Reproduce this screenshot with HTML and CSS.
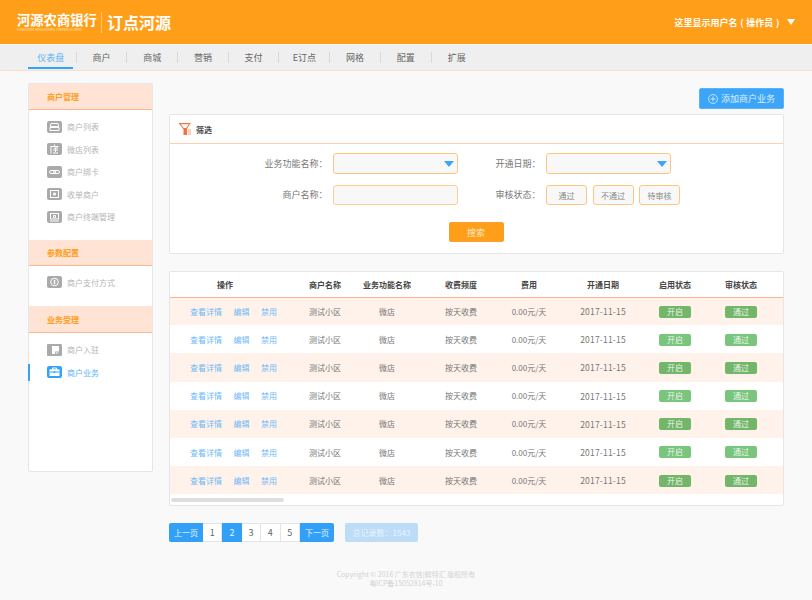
FILE: index.html
```html
<!DOCTYPE html>
<html lang="zh-CN">
<head>
<meta charset="utf-8">
<title>商户业务</title>
<link rel="stylesheet" href="styles.css">
</head>
<body>
<header class="topbar">
  <div class="logo">
    <div class="logo-bank">
      <span class="logo-cn">河源农商银行</span>
      <span class="logo-en">GUANGDONG HEYUAN RURAL COMMERCIAL BANK</span>
    </div>
    <span class="logo-name">订点河源</span>
  </div>
  <div class="user">这里显示用户名 ( 操作员 ) <svg class="user-caret" width="8" height="6" viewBox="0 0 8 6"><path d="M0 0h8L4 6z" fill="#fff"/></svg></div>
</header>
<nav class="nav">
  <a class="nav-item active"><span>仪表盘</span></a>
  <a class="nav-item"><span>商户</span></a>
  <a class="nav-item"><span>商城</span></a>
  <a class="nav-item"><span>营销</span></a>
  <a class="nav-item"><span>支付</span></a>
  <a class="nav-item"><span>E订点</span></a>
  <a class="nav-item"><span>网格</span></a>
  <a class="nav-item"><span>配置</span></a>
  <a class="nav-item last"><span>扩展</span></a>
</nav>
<div class="content">
  <aside class="sidebar">
    <h3 class="side-head">商户管理</h3>
    <ul class="side-list">
      <li class="side-item"><svg class="side-icon" viewBox="0 0 15 12"><rect width="15" height="12" rx="2" fill="#aaa"/><path d="M4 2.500h7l.7 3H3.300zM3 6.500h9v3H3z" fill="none" stroke="#fff"/></svg>商户列表</li>
      <li class="side-item"><svg class="side-icon" viewBox="0 0 15 12"><rect width="15" height="12" rx="2" fill="#aaa"/><path d="M7.500 1.500v2M3.500 3.500h8M4 3.500v7M7 5h4M8.500 5v4M6 7h5M6 10h5" fill="none" stroke="#fff"/></svg>微店列表</li>
      <li class="side-item"><svg class="side-icon" viewBox="0 0 15 12"><rect width="15" height="12" rx="2" fill="#aaa"/><rect x="2.500" y="4.500" width="6" height="3" rx="1.500" fill="none" stroke="#fff"/><rect x="6.500" y="4.500" width="6" height="3" rx="1.500" fill="none" stroke="#fff"/></svg>商户绑卡</li>
      <li class="side-item"><svg class="side-icon" viewBox="0 0 15 12"><rect width="15" height="12" rx="2" fill="#aaa"/><rect x="3.500" y="2.500" width="8" height="7" fill="none" stroke="#fff"/><circle cx="7.500" cy="6" r="1.500" fill="#fff"/></svg>收单商户</li>
      <li class="side-item"><svg class="side-icon" viewBox="0 0 15 12"><rect width="15" height="12" rx="2" fill="#aaa"/><rect x="3.500" y="2.500" width="8" height="5.500" fill="none" stroke="#fff"/><path d="M3 10h9M6.500 4.500h2v2h-2z" fill="none" stroke="#fff"/></svg>商户终端管理</li>
    </ul>
    <h3 class="side-head">参数配置</h3>
    <ul class="side-list roomy">
      <li class="side-item"><svg class="side-icon" viewBox="0 0 15 12"><rect width="15" height="12" rx="2" fill="#aaa"/><circle cx="7.500" cy="6" r="3.800" fill="none" stroke="#fff"/><path d="M7.500 3.800v4.400" stroke="#fff" stroke-width="1.500"/></svg>商户支付方式</li>
    </ul>
    <h3 class="side-head tall">业务受理</h3>
    <ul class="side-list">
      <li class="side-item"><svg class="side-icon" viewBox="0 0 15 12"><rect width="15" height="12" rx="1" fill="#aaa"/><path d="M5 2h7v5.500H8V10H5z" fill="#fff"/><path d="M8.800 8.200H12L8.800 10.500z" fill="#e4e4e4"/></svg>商户入驻</li>
      <li class="side-item current"><svg class="side-icon" viewBox="0 0 15 12"><rect width="15" height="12" rx="2" fill="#35a2fa"/><path d="M5.500 3.200V2h4v1.200" fill="none" stroke="#fff"/><rect x="2.500" y="3.200" width="10" height="6.800" rx=".5" fill="#fff"/><path d="M2.500 6h10" stroke="#35a2fa"/><path d="M6.800 5.200h1.400v1.600H6.800z" fill="#35a2fa"/></svg>商户业务</li>
    </ul>
  </aside>
  <main class="main">
    <div class="toolbar">
      <button class="add-btn"><svg class="add-icon" width="10" height="10" viewBox="0 0 10 10"><circle cx="5" cy="5" r="4.500" fill="none" stroke="#dceffe" stroke-width=".8"/><path d="M5 2.500v5M2.500 5h5" stroke="#dceffe" stroke-width=".8"/></svg>添加商户业务</button>
    </div>
    <section class="card filter">
      <div class="filter-head">
        <svg class="filter-icon" width="12" height="12" viewBox="0 0 12 12"><path d="M0 .6h11.500" stroke="#f4733c" stroke-width="1.200"/><path d="M1 1l3.500 4.500h3L10.500 1" fill="none" stroke="#f4733c" stroke-width="1.100"/><path d="M4.500 5.500h3.500V12H4.500z" fill="#f4733c"/><path d="M8.800 7H12M8.800 9H12M8.800 11H12" stroke="#f9a27f"/></svg>
        <span>筛选</span>
      </div>
      <div class="filter-grid">
        <label class="field-label">业务功能名称：</label>
        <div class="select"><i class="caret"></i></div>
        <label class="field-label">开通日期：</label>
        <div class="select"><i class="caret"></i></div>
        <label class="field-label">商户名称：</label>
        <div class="input"></div>
        <label class="field-label">审核状态：</label>
        <div class="status-group">
          <button class="status-btn">通过</button>
          <button class="status-btn">不通过</button>
          <button class="status-btn">待审核</button>
        </div>
      </div>
      <div class="filter-actions"><button class="search-btn">搜索</button></div>
    </section>
    <section class="card table-card">
      <table class="data">
        <colgroup>
          <col class="c-op"><col class="c-name"><col class="c-func"><col class="c-freq"><col class="c-fee"><col class="c-date"><col class="c-on"><col class="c-check">
        </colgroup>
        <thead>
          <tr><th class="op-head">操作</th><th>商户名称</th><th>业务功能名称</th><th>收费频度</th><th>费用</th><th>开通日期</th><th>启用状态</th><th>审核状态</th></tr>
        </thead>
        <tbody>
          <tr><td class="ops"><a>查看详情</a><a>编辑</a><a>禁用</a></td><td>测试小区</td><td>微店</td><td>按天收费</td><td>0.00元/天</td><td class="date">2017-11-15</td><td><span class="tag">开启</span></td><td><span class="tag">通过</span></td></tr>
          <tr><td class="ops"><a>查看详情</a><a>编辑</a><a>禁用</a></td><td>测试小区</td><td>微店</td><td>按天收费</td><td>0.00元/天</td><td class="date">2017-11-15</td><td><span class="tag">开启</span></td><td><span class="tag">通过</span></td></tr>
          <tr><td class="ops"><a>查看详情</a><a>编辑</a><a>禁用</a></td><td>测试小区</td><td>微店</td><td>按天收费</td><td>0.00元/天</td><td class="date">2017-11-15</td><td><span class="tag">开启</span></td><td><span class="tag">通过</span></td></tr>
          <tr><td class="ops"><a>查看详情</a><a>编辑</a><a>禁用</a></td><td>测试小区</td><td>微店</td><td>按天收费</td><td>0.00元/天</td><td class="date">2017-11-15</td><td><span class="tag">开启</span></td><td><span class="tag">通过</span></td></tr>
          <tr><td class="ops"><a>查看详情</a><a>编辑</a><a>禁用</a></td><td>测试小区</td><td>微店</td><td>按天收费</td><td>0.00元/天</td><td class="date">2017-11-15</td><td><span class="tag">开启</span></td><td><span class="tag">通过</span></td></tr>
          <tr><td class="ops"><a>查看详情</a><a>编辑</a><a>禁用</a></td><td>测试小区</td><td>微店</td><td>按天收费</td><td>0.00元/天</td><td class="date">2017-11-15</td><td><span class="tag">开启</span></td><td><span class="tag">通过</span></td></tr>
          <tr><td class="ops"><a>查看详情</a><a>编辑</a><a>禁用</a></td><td>测试小区</td><td>微店</td><td>按天收费</td><td>0.00元/天</td><td class="date">2017-11-15</td><td><span class="tag">开启</span></td><td><span class="tag">通过</span></td></tr>
        </tbody>
      </table>
      <div class="scroll-track"><div class="scroll-thumb"></div></div>
    </section>
    <div class="pager-row">
      <div class="pager">
        <a class="page wide on first">上一页</a>
        <a class="page">1</a>
        <a class="page on">2</a>
        <a class="page">3</a>
        <a class="page">4</a>
        <a class="page">5</a>
        <a class="page wide on final">下一页</a>
      </div>
      <div class="total">总记录数：1543</div>
    </div>
  </main>
</div>
<footer class="footer">
  <p>Copyright © 2016 广东农信|鲜特汇 版权所有</p>
  <p>粤ICP备15052814号-10</p>
</footer>
</body>
</html>
```
FILE: styles.css
```css
* { box-sizing: border-box; }
html, body { margin: 0; padding: 0; }
body {
  height: 600px;
  overflow: hidden;
  background: #f9f9f9;
  color: #777;
  font-family: "Noto Sans CJK SC", "Noto Sans", sans-serif;
  font-size: 8px;
}
button { font-family: inherit; cursor: pointer; padding: 0; }
ul { list-style: none; margin: 0; padding: 0; }
h3, p { margin: 0; }

.topbar {
  height: 44px;
  background: #ff9e18;
  color: #fff;
  display: flex;
  align-items: center;
  justify-content: space-between;
  padding: 0 17px 0 17px;
}
.logo { display: flex; align-items: center; }
.logo-bank {
  display: flex;
  flex-direction: column;
  width: 85px;
  height: 21px;
  border-right: 1px solid #ffc674;
}
.logo-cn { font-size: 13.300px; font-weight: 700; line-height: 16px; white-space: nowrap; }
.logo-en { font-size: 2.800px; line-height: 4px; white-space: nowrap; color: #ffe4bd; }
.logo-name { font-size: 16px; font-weight: 700; line-height: 22px; margin-left: 5px; }
.user { font-size: 9px; font-weight: 700; display: flex; align-items: center; white-space: pre; word-spacing: .6px; }
.user-caret { margin-left: 5px; }

.nav {
  height: 27px;
  background: #efefef;
  border-top: 1px solid #f6f6f6;
  border-bottom: 1px solid #fbdcd0;
  display: flex;
  align-items: center;
  padding: 0 0 1px 26px;
}
.nav-item {
  position: relative;
  width: 50.700px;
  height: 11px;
  border-right: 1px solid #d9d9d9;
  display: flex;
  align-items: center;
  justify-content: center;
  font-size: 9px;
  color: #666;
}
.nav-item.last { border-right: 0; }
.nav-item.active { color: #5bb2f7; }
.nav-item.active::after {
  content: "";
  position: absolute;
  left: 2px;
  width: 45px;
  top: 15px;
  height: 2px;
  background: #35a2fa;
}

.content {
  display: flex;
  gap: 16px;
  padding: 0 28px 0 28px;
  align-items: flex-start;
}
.sidebar {
  width: 125px;
  height: 389px;
  margin-top: 12px;
  background: #fff;
  border: 1px solid #e6e6e6;
  border-radius: 2px;
  flex-shrink: 0;
  position: relative;
}
.side-head {
  height: 26px;
  padding-left: 18px;
  display: flex;
  align-items: center;
  background: #ffe3d4;
  border-bottom: 1px solid #ffb790;
  color: #ff9e18;
  font-size: 8px;
  font-weight: 700;
}
.side-head.tall { height: 27px; }
.side-list { padding: 5.500px 0 11.500px; }
.side-list.roomy { padding-bottom: 12.500px; }
.side-item {
  position: relative;
  height: 22.500px;
  display: flex;
  align-items: center;
  padding-left: 18px;
  color: #b5b5b5;
  font-size: 8px;
}
.side-icon { width: 15px; height: 12px; margin-right: 5px; flex-shrink: 0; }
.side-item.current { color: #5bb2f7; }
.side-item.current::before {
  content: "";
  position: absolute;
  left: -1px;
  top: 3px;
  width: 2px;
  height: 17px;
  background: #35a2fa;
}

.main { flex: 1; min-width: 0; padding-top: 17px; }
.toolbar { display: flex; justify-content: flex-end; margin-bottom: 5px; height: 21px; }
.add-btn {
  width: 85px;
  height: 21px;
  background: #3ca5f8;
  border: 1px solid #5ab3f8;
  border-radius: 2px;
  color: #dceffe;
  font-size: 9px;
  display: flex;
  align-items: center;
  padding-left: 8px;
}
.add-icon { margin-right: 3px; flex-shrink: 0; }

.card {
  background: #fff;
  border: 1px solid #e6e6e6;
  border-radius: 2px;
}
.filter { height: 140px; }
.filter-head {
  height: 29px;
  display: flex;
  align-items: center;
  padding-left: 9px;
  border-bottom: 1px solid #ffcfae;
  color: #444;
  font-weight: 700;
  font-size: 8px;
}
.filter-icon { margin-right: 5px; }
.filter-grid {
  display: grid;
  grid-template-columns: 155px 125px 72px 125px;
  column-gap: 8px;
  row-gap: 11px;
  padding-top: 9px;
  align-items: center;
}
.field-label {
  text-align: right;
  font-size: 9px;
  color: #777;
  line-height: 20px;
  margin-right: -2.500px;
}
.select, .input {
  height: 21px;
  background: #f8f8f8;
  border: 1px solid #ffc680;
  border-radius: 3px;
  position: relative;
}
.input { height: 20px; border-color: #ffcf8f; }
.caret {
  position: absolute;
  right: 3px;
  top: 7px;
  width: 0;
  height: 0;
  border-left: 5px solid transparent;
  border-right: 5px solid transparent;
  border-top: 6px solid #3ca5f8;
}
.status-group { display: flex; gap: 5.500px; }
.status-btn {
  width: 41px;
  height: 20px;
  flex-shrink: 0;
  background: #f8f8f8;
  border: 1px solid #ffc680;
  border-radius: 3px;
  color: #888;
  font-size: 8px;
}
.filter-actions { display: flex; justify-content: center; padding: 17px 1px 0 0; }
.search-btn {
  width: 55px;
  height: 20px;
  background: #ff9e18;
  border: 1px solid #f5a030;
  border-radius: 2px;
  color: #ffe9c9;
  font-size: 9px;
}

.table-card { margin-top: 17px; height: 235px; position: relative; overflow: hidden; }
.data { width: 100%; border-collapse: collapse; table-layout: fixed; }
.c-op { width: 125px; }
.c-name { width: 60px; }
.c-func { width: 64px; }
.c-freq { width: 84px; }
.c-fee { width: 52px; }
.c-date { width: 96px; }
.c-on { width: 48px; }
.c-check { width: 84px; }
.data th {
  height: 25px;
  padding: 0;
  border-bottom: 1px solid #ffb58a;
  color: #444;
  font-size: 8px;
  font-weight: 700;
  text-align: center;
  white-space: nowrap;
}
.data th.op-head { padding-right: 15px; }
.data td {
  height: 28.200px;
  padding: 0;
  color: #777;
  font-size: 8px;
  text-align: center;
  white-space: nowrap;
}
.data td.date { font-size: 8.500px; letter-spacing: .2px; }
.data tbody tr:nth-child(odd) td { background: #fff2ea; }
.ops { padding-left: 20px !important; text-align: left !important; }
.ops a { color: #6db9f7; margin-right: 11.500px; }
.tag {
  display: inline-block;
  width: 32px;
  height: 12px;
  line-height: 12px;
  border-radius: 2px;
  background: #7ac57d;
  color: #e6f5e6;
  font-size: 8px;
  vertical-align: middle;
}
.data tbody tr:nth-child(odd) .tag { background: #73b66a; }
.scroll-track { padding: 3.500px 1px 0; }
.scroll-thumb { width: 113px; height: 4px; background: #dedede; border-radius: 2px; }

.pager-row { display: flex; align-items: center; margin-top: 17px; gap: 11px; }
.pager { display: flex; height: 19px; }
.page {
  width: 19.400px;
  display: flex;
  align-items: center;
  justify-content: center;
  background: #fff;
  border: 1px solid #e4e4e4;
  border-left: 0;
  color: #666;
  font-size: 9px;
}
.page.on { background: #33a0f8; color: #e6f3fe; border: 0; }
.page.wide { width: 34px; font-size: 8px; }
.page.first { border-radius: 2px 0 0 2px; }
.page.final { border-radius: 0 2px 2px 0; }
.total {
  width: 73px;
  height: 19px;
  line-height: 19px;
  text-align: center;
  background: #bcdcf8;
  border-radius: 2px;
  color: #e9f4fe;
  font-size: 8px;
}

.footer {
  margin-top: 28px;
  text-align: center;
  color: #d2d2d2;
  font-size: 7px;
  line-height: 9px;
}
```
